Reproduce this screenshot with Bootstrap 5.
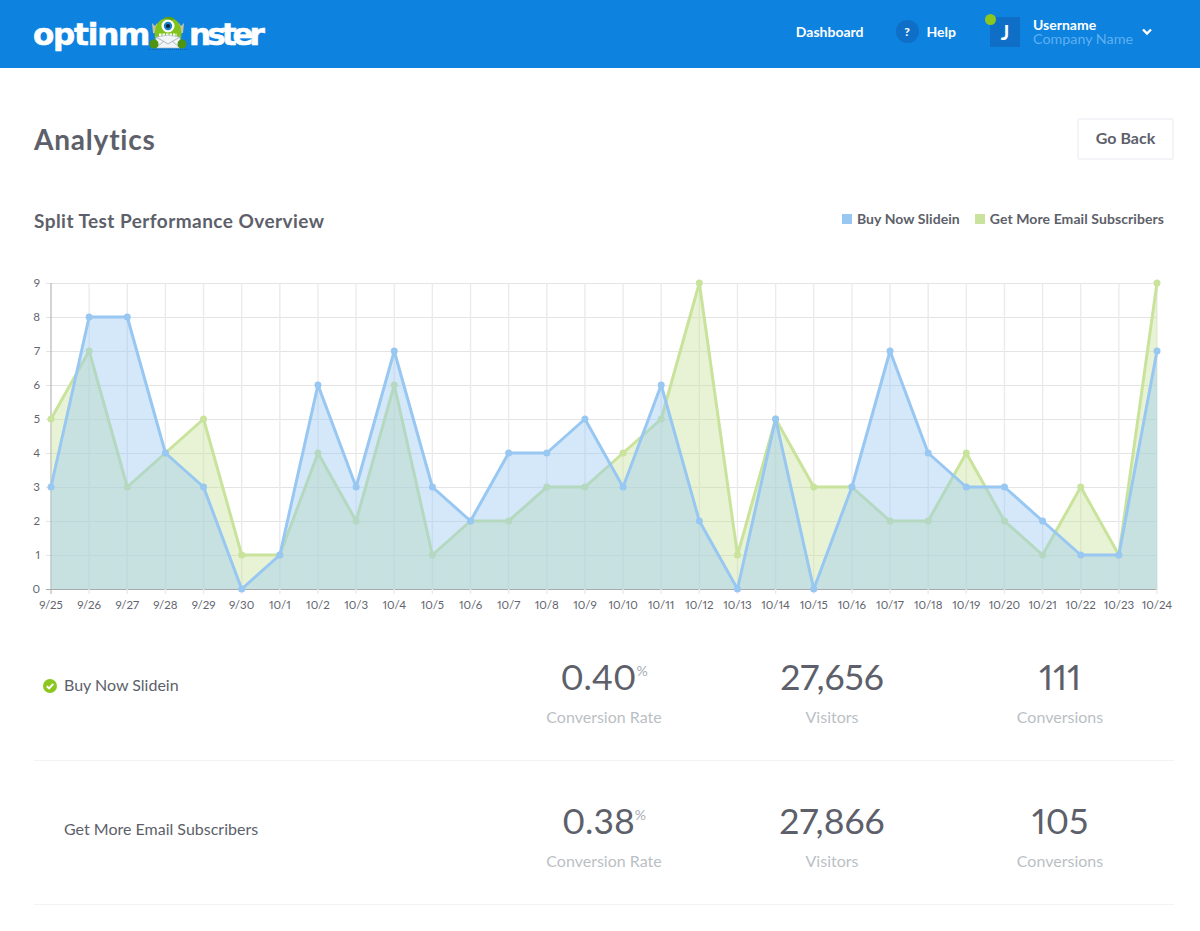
<!DOCTYPE html>
<html lang="en">
<head>
    <meta charset="UTF-8">
    <meta name="viewport" content="width=device-width, initial-scale=1.0">
    <title>Analytics</title>
    <link rel="stylesheet" href="https://cdn.jsdelivr.net/npm/bootstrap@5.3.2/dist/css/bootstrap.min.css">
    <style>
        body { font-family: "Lato", "Liberation Sans", sans-serif; color: #5d5f6a; background: #fff; font-variant-numeric: proportional-nums; }
        .om-header { height: 68px; background: #0d82df; padding: 0 47px 0 33px; }
        .om-logo { font-family: "DejaVu Sans", sans-serif; font-weight: 700; font-size: 31px; line-height: 68px; color: #fff; letter-spacing: -1.2px; -webkit-text-stroke: .6px #fff; text-decoration: none; }
        .om-logo svg { margin: 0 -1px; }
        .logo-end { letter-spacing: -4px; }
        .om-nav { padding-bottom: 5px; }
        .om-link { color: #fff; font-size: 14px; font-weight: 700; text-decoration: none; }
        .help-dot { width: 23px; height: 23px; border-radius: 50%; background: #0f6fc6; color: #fff; font-size: 12px; font-weight: 900; }
        .om-avatar { width: 30px; height: 30px; margin: 0 13px 0 34px; background: #0f6fc6; color: #fff; font-size: 20px; font-weight: 700; }
        .om-online { position: absolute; left: -5px; top: -3px; width: 11px; height: 11px; border-radius: 50%; background: #8cc620; }
        .om-user { font-size: 14px; line-height: 14px; font-weight: 700; color: #fff; }
        .om-company { font-size: 14.3px; line-height: 14px; color: #5fb0f2; }
        .om-main { padding: 0 26px 0 34px; }
        .page-head { padding-top: 50px; height: 136px; }
        .page-title { font-size: 28px; font-weight: 700; letter-spacing: .8px; color: #5d5f6a; margin: 0; line-height: 42px; }
        .back-btn { width: 97px; height: 42px; border: 2px solid #f3f3f8; border-radius: 3px; font-size: 16px; font-weight: 700; color: #5d5f6a; padding: 0 0 2px; }
        .chart-head { height: 66px; }
        .chart-title { font-size: 19px; font-weight: 700; letter-spacing: .45px; margin: 0; line-height: 34px; color: #5d5f6a; }
        .legend-row { font-size: 14px; font-weight: 700; letter-spacing: .08px; line-height: 34px; padding-right: 10px; margin-top: -2px; }
        .swatch { width: 10px; height: 10px; margin-right: 5px; }
        .swatch-blue { background: #98c7f2; }
        .swatch-green { background: #c9e39c; }
        .legend-gap { margin-right: 15px; }
        .chart-box { display: block; width: 1140px; height: 347px; overflow: visible; }
        .chart-box text { font-family: "Lato", "Liberation Sans", sans-serif; font-size: 11.5px; fill: #62646e; }
        .stat-row { grid-template-columns: 2fr 1fr 1fr 1fr; height: 144px; border-bottom: 1px solid #f3f3f6; padding-top: 37px; }
        .stat-name { font-size: 16px; padding: 19px 0 0 30px; position: relative; color: #5d5f6a; }
        .stat-check { position: absolute; left: 9px; top: 25px; }
        .stat-num { font-size: 35.5px; line-height: 46px; color: #5d5f6a; font-weight: 400; }
        .stat-num sup { font-size: 14px; color: #a9adb3; top: -1em; vertical-align: baseline; }
        .stat-label { font-size: 16px; line-height: 20px; margin-top: 7px; color: #bbbfc4; }
    </style>
</head>
<body>
    <header class="om-header d-flex align-items-center justify-content-between">
        <a href="#" class="om-logo d-flex align-items-center">optinm<svg width="42" height="36" viewBox="0 0 42 36">
            <path d="M5 17 L4 7 L7 10 L9 7 L10 18Z M35 17 L36 7 L33 10 L31 7 L30 18Z" fill="#c9c2a6"/>
            <path d="M7 24 C5 8 12 2 20 2 C29 2 35 8 33 24Z" fill="#7fc31c"/>
            <path d="M16 2 Q21 -1 27 3 L22 5Z" fill="#5fa010"/>
            <circle cx="20" cy="10" r="6.5" fill="#fff"/>
            <circle cx="20" cy="10" r="4.2" fill="#1c7fc9"/>
            <circle cx="20" cy="10" r="2" fill="#123"/>
            <path d="M11 19 H29" stroke="#fff" stroke-width="3" stroke-dasharray="2.5 1"/>
            <path d="M8 21 L20 19 L32 21 V32 H8Z" fill="#f2f5f8" stroke="#9aa7b5" stroke-width=".6"/>
            <path d="M8 21 L20 28 L32 21 M8 32 L16 25 M32 32 L24 25" fill="none" stroke="#9aa7b5" stroke-width=".8"/>
            <circle cx="6" cy="28" r="4.5" fill="#4e9412"/>
            <circle cx="34" cy="28" r="4.5" fill="#4e9412"/>
            <path d="M0 33.5 H41" stroke="#0a5fa8" stroke-width=".8" stroke-dasharray="1 1"/>
        </svg><span class="logo-end">nster</span></a>
        <nav class="om-nav d-flex align-items-center">
            <a href="#" class="om-link me-4 pe-2">Dashboard</a>
            <a href="#" class="om-link d-flex align-items-center gap-2">
                <span class="help-dot d-flex align-items-center justify-content-center">?</span>Help
            </a>
            <div class="om-avatar position-relative d-flex align-items-center justify-content-center">J<span class="om-online"></span></div>
            <div class="me-2">
                <div class="om-user">Username</div>
                <div class="om-company">Company Name</div>
            </div>
            <svg width="12" height="8" viewBox="0 0 12 8"><path d="M2 1.5 L6 5.5 L10 1.5" fill="none" stroke="#fff" stroke-width="2.4"/></svg>
        </nav>
    </header>

    <main class="om-main">
        <div class="page-head d-flex justify-content-between align-items-start">
            <h1 class="page-title">Analytics</h1>
            <button type="button" class="btn back-btn">Go Back</button>
        </div>

        <div class="chart-head d-flex justify-content-between align-items-start">
            <h2 class="chart-title">Split Test Performance Overview</h2>
            <div class="legend-row d-flex align-items-center">
                <span class="legend-gap d-flex align-items-center"><span class="swatch swatch-blue"></span>Buy Now Slidein</span>
                <span class="d-flex align-items-center"><span class="swatch swatch-green"></span>Get More Email Subscribers</span>
            </div>
        </div>

        <svg id="chart" class="chart-box" viewBox="34 270 1140 347" xmlns="http://www.w3.org/2000/svg"></svg>

        <div class="stat-row d-grid">
            <div class="stat-name">
                <svg class="stat-check" width="14" height="14" viewBox="0 0 14 14"><circle cx="7" cy="7" r="7" fill="#8cc620"/><path d="M3.8 7.2 L6.1 9.4 L10.2 5" fill="none" stroke="#fff" stroke-width="2"/></svg>
                Buy Now Slidein
            </div>
            <div class="text-center"><div class="stat-num">0.40<sup>%</sup></div><div class="stat-label">Conversion Rate</div></div>
            <div class="text-center"><div class="stat-num">27,656</div><div class="stat-label">Visitors</div></div>
            <div class="text-center"><div class="stat-num">111</div><div class="stat-label">Conversions</div></div>
        </div>
        <div class="stat-row d-grid">
            <div class="stat-name">Get More Email Subscribers</div>
            <div class="text-center"><div class="stat-num">0.38<sup>%</sup></div><div class="stat-label">Conversion Rate</div></div>
            <div class="text-center"><div class="stat-num">27,866</div><div class="stat-label">Visitors</div></div>
            <div class="text-center"><div class="stat-num">105</div><div class="stat-label">Conversions</div></div>
        </div>
    </main>

    <script src="https://cdn.jsdelivr.net/npm/bootstrap@5.3.2/dist/js/bootstrap.bundle.min.js"></script>
    <script>
        const days = ['9/25','9/26','9/27','9/28','9/29','9/30'];
        for (let d = 1; d <= 24; d++) days.push('10/' + d);
        const blue = [3,8,8,4,3,0,1,6,3,7,3,2,4,4,5,3,6,2,0,5,0,3,7,4,3,3,2,1,1,7];
        const green = [5,7,3,4,5,1,1,4,2,6,1,2,2,3,3,4,5,9,1,5,3,3,2,2,4,2,1,3,1,9];

        const xAt = i => 51 + i * (1106 / 29);
        const yAt = v => 589 - v * 34;
        let out = '';

        // grid
        for (let v = 0; v <= 9; v++) {
            out += `<line x1="46" x2="1157" y1="${yAt(v) + .5}" y2="${yAt(v) + .5}" stroke="${v ? '#e4e4e6' : '#a9a9ad'}"/>`;
            out += `<text x="40" y="${yAt(v) + 4}" text-anchor="end">${v}</text>`;
        }
        days.forEach((d, i) => {
            out += `<line x1="${xAt(i)}" x2="${xAt(i)}" y1="283" y2="594" stroke="${i ? '#ebebed' : '#a9a9ad'}" stroke-width="${i ? 1.4 : 1}"/>`;
            out += `<text x="${xAt(i)}" y="609" text-anchor="middle">${d}</text>`;
        });

        // green goes first, the blue fill sits over it
        function series(data, color) {
            const pts = data.map((v, i) => xAt(i) + ',' + yAt(v)).join(' ');
            let s = `<polygon points="${xAt(0)},589 ${pts} ${xAt(29)},589" fill="${color}" fill-opacity=".42"/>`;
            s += `<polyline points="${pts}" fill="none" stroke="${color}" stroke-width="3" stroke-linejoin="round"/>`;
            data.forEach((v, i) => { s += `<circle cx="${xAt(i)}" cy="${yAt(v)}" r="3.5" fill="${color}"/>`; });
            return s;
        }
        out += series(green, '#c9e39c');
        out += series(blue, '#98c7f2');
        document.getElementById('chart').innerHTML = out;
    </script>
</body>
</html>
